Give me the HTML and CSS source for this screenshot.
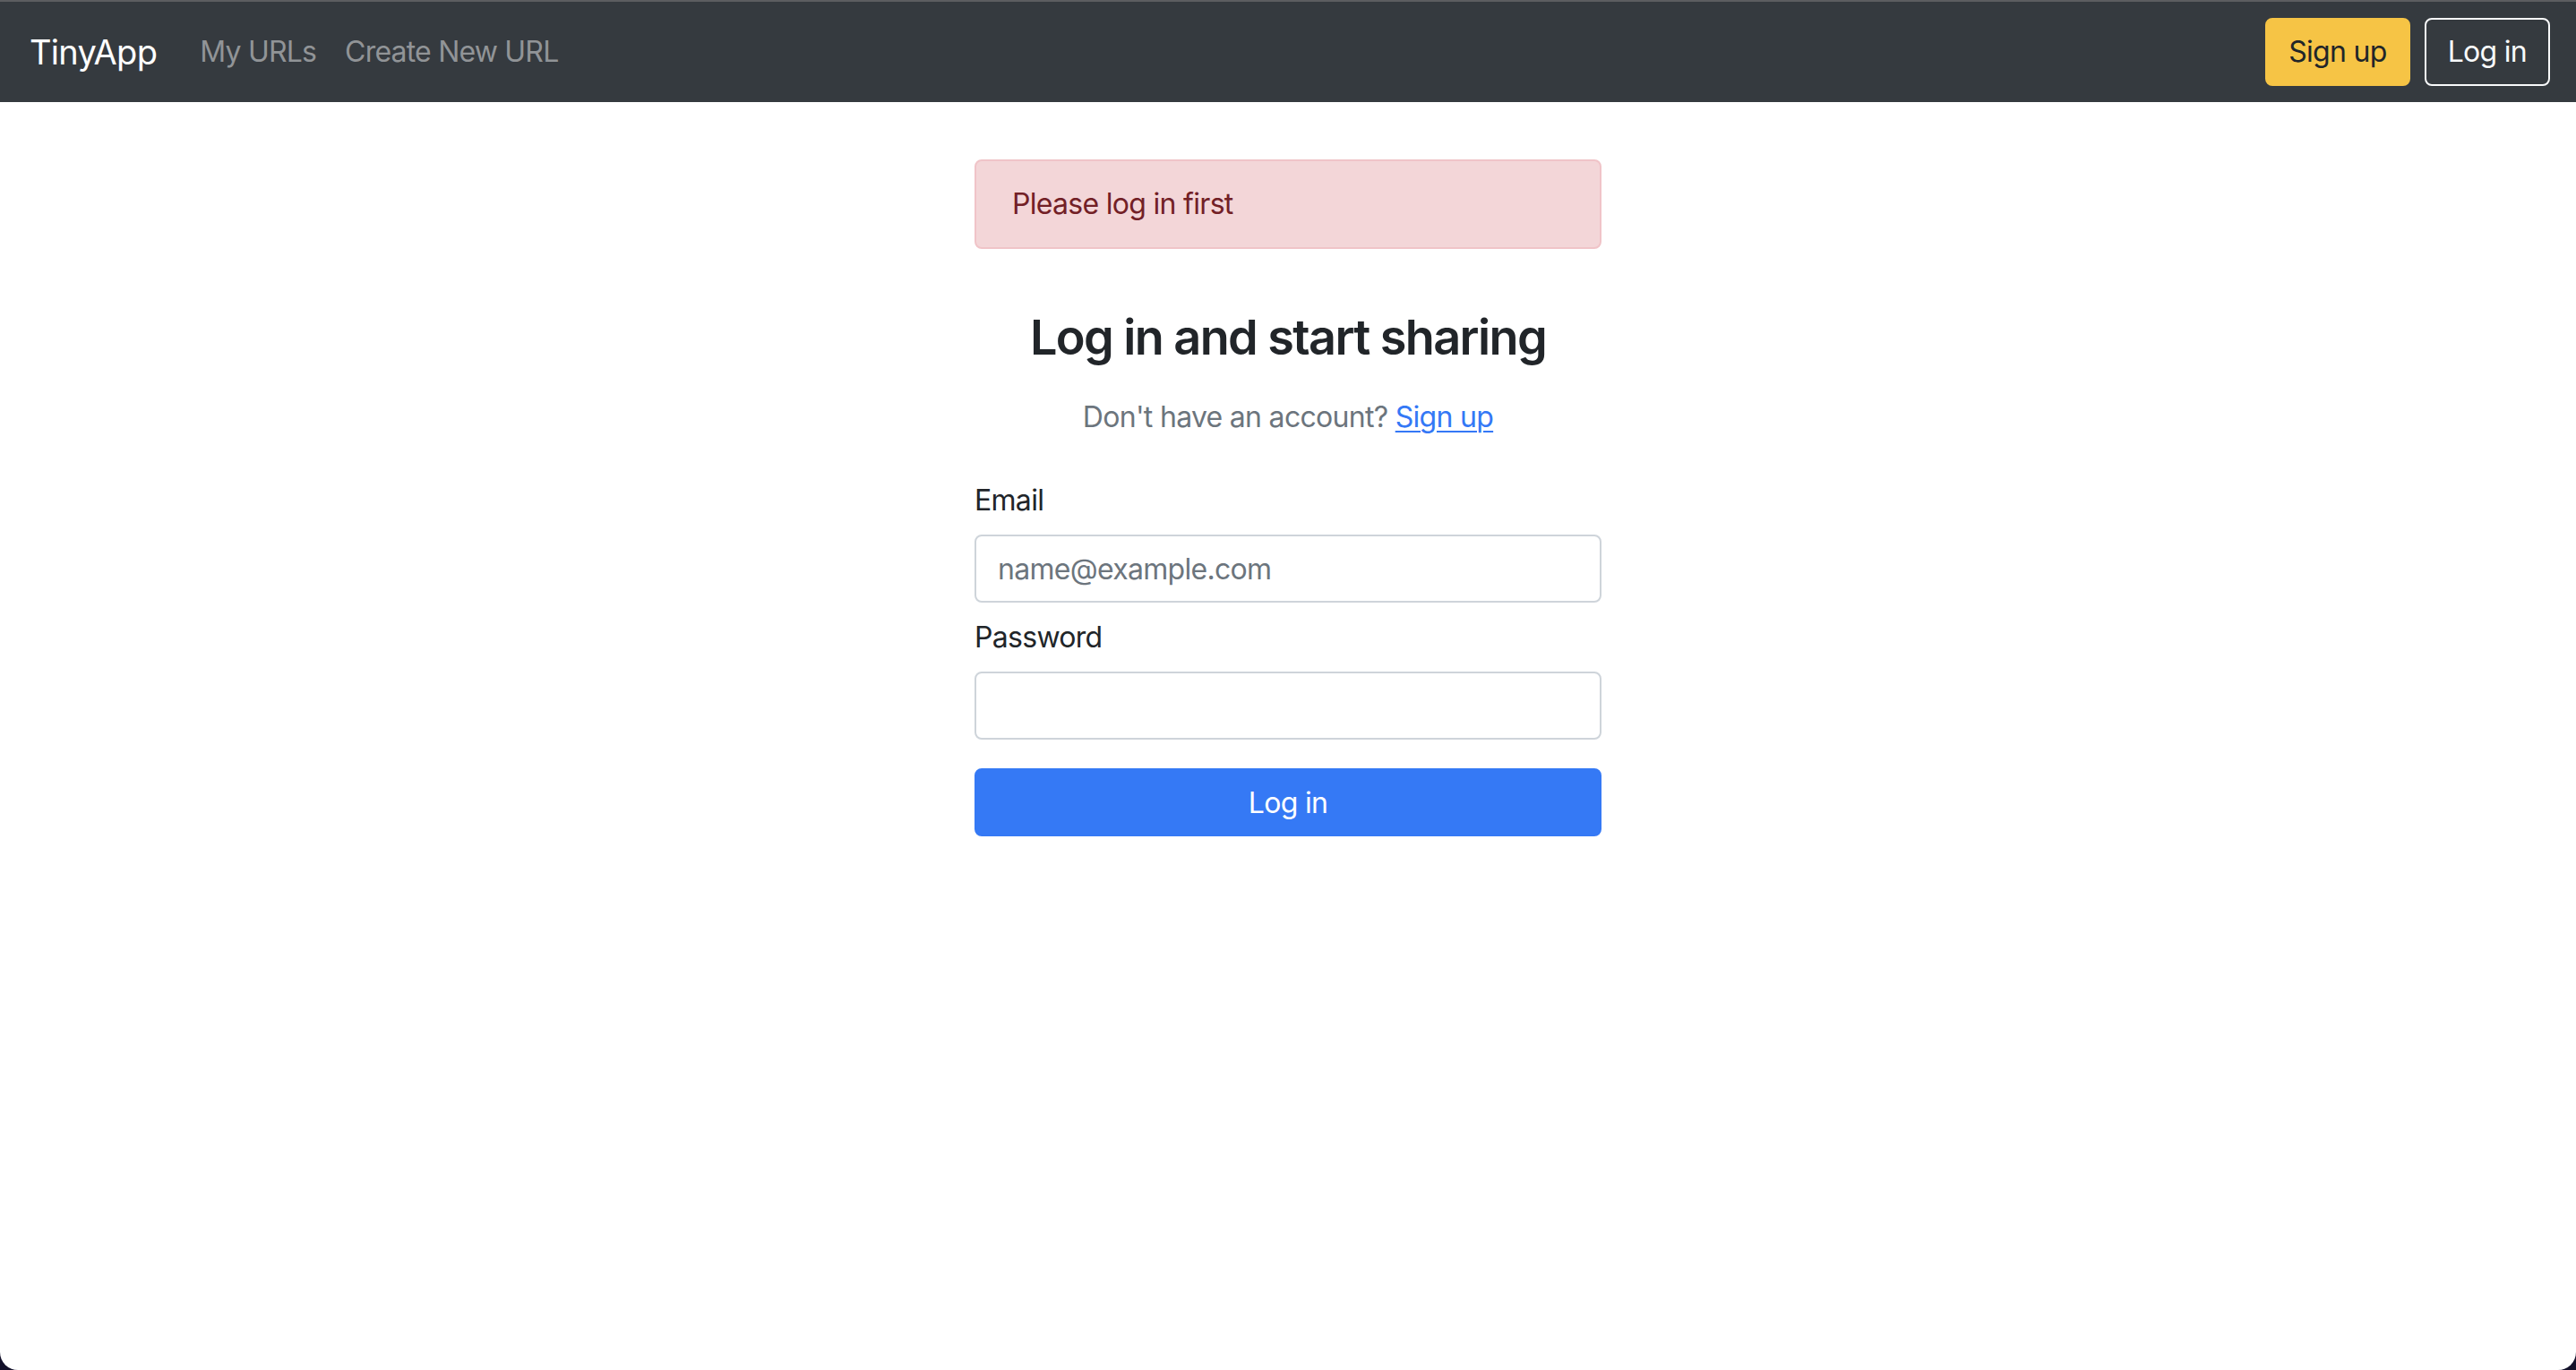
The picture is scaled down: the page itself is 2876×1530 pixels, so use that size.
FILE: index.html
```html
<!DOCTYPE html>
<html lang="en">
<head>
<meta charset="utf-8">
<title>TinyApp - Log in</title>
<link rel="stylesheet" href="styles.css">
</head>
<body>
<div class="window">
  <nav class="navbar">
    <a class="brand" href="#">TinyApp</a>
    <ul class="nav-links">
      <li><a href="#">My URLs</a></li>
      <li><a href="#">Create New URL</a></li>
    </ul>
    <div class="nav-actions">
      <a class="btn btn-warning" href="#">Sign up</a>
      <a class="btn btn-outline-light" href="#">Log in</a>
    </div>
  </nav>
  <main class="login">
    <div class="alert">Please log in first</div>
    <h3 class="title">Log in and start sharing</h3>
    <p class="subtext">Don't have an account? <a href="#">Sign up</a></p>
    <form class="form">
      <label class="label" for="email">Email</label>
      <input class="input" id="email" type="email" placeholder="name@example.com">
      <label class="label label-password" for="password">Password</label>
      <input class="input" id="password" type="password">
      <button class="btn-submit" type="button">Log in</button>
    </form>
  </main>
</div>
</body>
</html>
```

FILE: styles.css
```css
* {
  box-sizing: border-box;
}

html, body {
  margin: 0;
  padding: 0;
  height: 100%;
}

body {
  background: #13112a;
  font-family: Inter, "Noto Sans", "Liberation Sans", sans-serif;
  color: #212529;
  overflow: hidden;
}

.window {
  height: 1530px;
  background: #ffffff;
  border-radius: 0 0 20px 20px;
  overflow: hidden;
}

.navbar {
  height: 114px;
  background: #353a3f;
  border-top: 2px solid #5c5d60;
  display: flex;
  align-items: center;
  padding: 0 29px 0 33px;
}

.brand {
  color: #ffffff;
  font-size: 38px;
  line-height: 60px;
  text-decoration: none;
  margin-right: 32px;
  letter-spacing: -0.7px;
}

.nav-links {
  list-style: none;
  display: flex;
  margin: 0;
  padding: 0;
  flex: 1;
}

.nav-links a {
  display: block;
  color: #919497;
  text-decoration: none;
  font-size: 32px;
  line-height: 48px;
  padding: 0 16px;
  letter-spacing: -0.8px;
}

.nav-actions {
  display: flex;
  gap: 16px;
}

.btn {
  display: block;
  height: 76px;
  padding: 0 24px;
  border: 2px solid transparent;
  border-radius: 8px;
  font-size: 32px;
  line-height: 72px;
  text-decoration: none;
  letter-spacing: -0.7px;
}

.btn-warning {
  background: #f6c445;
  border-color: #f6c445;
  color: #212529;
}

.btn-outline-light {
  background: transparent;
  border-color: #f8f9fa;
  color: #f8f9fa;
}

.login {
  width: 700px;
  margin: 0 auto;
  padding-top: 64px;
}

.alert {
  height: 100px;
  padding: 24px 40px;
  background: #f3d6d8;
  border: 2px solid #f0c4c8;
  border-radius: 8px;
  color: #722026;
  font-size: 32px;
  line-height: 48px;
  letter-spacing: -0.7px;
}

.title {
  margin: 65px 0 0;
  text-align: center;
  font-size: 54px;
  line-height: 67px;
  font-weight: 600;
  color: #212529;
  letter-spacing: -1.6px;
}

.subtext {
  margin: 32px 0 0;
  text-align: center;
  font-size: 32px;
  line-height: 48px;
  color: #6c757d;
  letter-spacing: -0.7px;
}

.subtext a {
  color: #3478f6;
  text-decoration: underline;
  text-underline-offset: 4px;
  text-decoration-thickness: 2px;
}

.form {
  margin-top: 45px;
  display: flex;
  flex-direction: column;
}

.label {
  display: block;
  font-size: 32px;
  line-height: 48px;
  margin-bottom: 14px;
  color: #212529;
  letter-spacing: -0.7px;
}

.label-password {
  margin-top: 15px;
}

.input {
  display: block;
  width: 100%;
  height: 76px;
  padding: 0 24px;
  border: 2px solid #ced4da;
  border-radius: 8px;
  font-family: inherit;
  font-size: 32px;
  color: #495057;
  background: #ffffff;
  outline: none;
  letter-spacing: -0.7px;
}

.input::placeholder {
  color: #6c757d;
  opacity: 1;
}

.btn-submit {
  display: block;
  width: 100%;
  height: 76px;
  margin-top: 32px;
  background: #3579f5;
  border: 2px solid #3579f5;
  border-radius: 8px;
  color: #ffffff;
  font-family: inherit;
  font-size: 32px;
  line-height: 72px;
  letter-spacing: -0.7px;
  cursor: pointer;
}
```
